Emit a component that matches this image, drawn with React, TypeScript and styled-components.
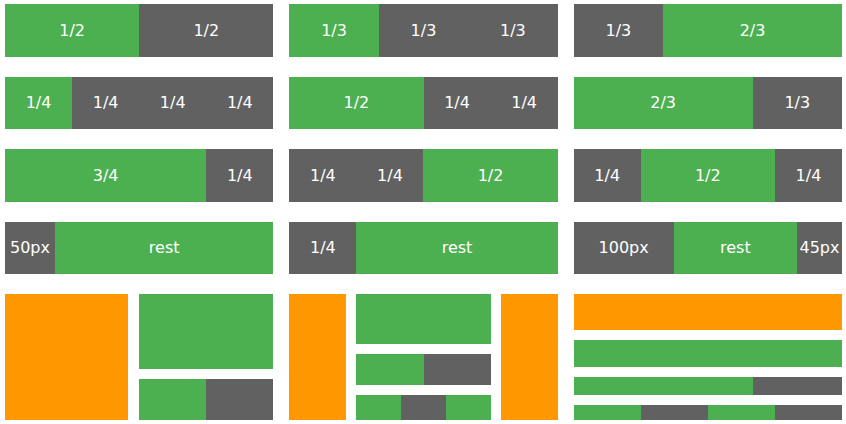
import { createGlobalStyle } from 'styled-components';
import styled from 'styled-components';

type Tone = 'green' | 'gray' | 'orange';

const colors: Record<Tone, string> = {
  green: '#4caf50',
  gray: '#616161',
  orange: '#ff9800',
};

const GlobalStyle = createGlobalStyle`
  html, body {
    margin: 0;
    padding: 0;
    background: #fff;
    font-family: 'DejaVu Sans', Verdana, sans-serif;
  }
`;

const Page = styled.div`
  display: grid;
  grid-template-columns: repeat(3, 268.33px);
  column-gap: 16px;
  padding: 4px 0 0 5px;
`;

const Column = styled.div`
  display: flex;
  flex-direction: column;
  gap: 20px;
`;

const Bar = styled.div`
  display: flex;
  height: 52.5px;
`;

const Cell = styled.div<{ $tone: Tone; $grow?: number; $width?: number }>`
  display: flex;
  align-items: center;
  justify-content: center;
  flex: ${(p) => (p.$width ? `0 0 ${p.$width}px` : `${p.$grow ?? 1} 1 0`)};
  min-width: 0;
  background: ${(p) => colors[p.$tone]};
  color: #fff;
  font-size: 16px;
  white-space: nowrap;
`;

const Block = styled.div<{ $tone: Tone; $h?: number }>`
  background: ${(p) => colors[p.$tone]};
  ${(p) => (p.$h ? `height: ${p.$h}px; flex: 0 0 ${p.$h}px;` : 'flex: 1 1 0;')}
`;

const Split = styled.div<{ $h?: number }>`
  display: flex;
  ${(p) => (p.$h ? `height: ${p.$h}px; flex: 0 0 ${p.$h}px;` : 'flex: 1 1 0;')}
`;

const Piece = styled.div<{ $tone: Tone; $grow?: number }>`
  flex: ${(p) => p.$grow ?? 1} 1 0;
  background: ${(p) => colors[p.$tone]};
`;

const Stack = styled.div`
  display: flex;
  flex-direction: column;
  gap: 10px;
  min-width: 0;
`;

const SideLayout = styled.div`
  display: grid;
  grid-template-columns: 123px 1fr;
  column-gap: 11px;
  height: 126px;
`;

const HolyLayout = styled.div`
  display: grid;
  grid-template-columns: 57px 1fr 57px;
  column-gap: 10px;
  height: 126px;
`;

const StripLayout = styled(Stack)`
  height: 126px;
`;

export default function App() {
  return (
    <>
      <GlobalStyle />
      <Page>
        <Column>
          <Bar>
            <Cell $tone="green">1/2</Cell>
            <Cell $tone="gray">1/2</Cell>
          </Bar>
          <Bar>
            <Cell $tone="green">1/4</Cell>
            <Cell $tone="gray">1/4</Cell>
            <Cell $tone="gray">1/4</Cell>
            <Cell $tone="gray">1/4</Cell>
          </Bar>
          <Bar>
            <Cell $tone="green" $grow={3}>3/4</Cell>
            <Cell $tone="gray">1/4</Cell>
          </Bar>
          <Bar>
            <Cell $tone="gray" $width={50}>50px</Cell>
            <Cell $tone="green">rest</Cell>
          </Bar>
          <SideLayout>
            <Block $tone="orange" />
            <Stack>
              <Block $tone="green" $h={75} />
              <Split>
                <Piece $tone="green" />
                <Piece $tone="gray" />
              </Split>
            </Stack>
          </SideLayout>
        </Column>

        <Column>
          <Bar>
            <Cell $tone="green">1/3</Cell>
            <Cell $tone="gray">1/3</Cell>
            <Cell $tone="gray">1/3</Cell>
          </Bar>
          <Bar>
            <Cell $tone="green" $grow={2}>1/2</Cell>
            <Cell $tone="gray">1/4</Cell>
            <Cell $tone="gray">1/4</Cell>
          </Bar>
          <Bar>
            <Cell $tone="gray">1/4</Cell>
            <Cell $tone="gray">1/4</Cell>
            <Cell $tone="green" $grow={2}>1/2</Cell>
          </Bar>
          <Bar>
            <Cell $tone="gray" $grow={1}>1/4</Cell>
            <Cell $tone="green" $grow={3}>rest</Cell>
          </Bar>
          <HolyLayout>
            <Block $tone="orange" />
            <Stack>
              <Block $tone="green" $h={50} />
              <Split $h={31}>
                <Piece $tone="green" />
                <Piece $tone="gray" />
              </Split>
              <Split>
                <Piece $tone="green" />
                <Piece $tone="gray" />
                <Piece $tone="green" />
              </Split>
            </Stack>
            <Block $tone="orange" />
          </HolyLayout>
        </Column>

        <Column>
          <Bar>
            <Cell $tone="gray">1/3</Cell>
            <Cell $tone="green" $grow={2}>2/3</Cell>
          </Bar>
          <Bar>
            <Cell $tone="green" $grow={2}>2/3</Cell>
            <Cell $tone="gray">1/3</Cell>
          </Bar>
          <Bar>
            <Cell $tone="gray">1/4</Cell>
            <Cell $tone="green" $grow={2}>1/2</Cell>
            <Cell $tone="gray">1/4</Cell>
          </Bar>
          <Bar>
            <Cell $tone="gray" $width={100}>100px</Cell>
            <Cell $tone="green">rest</Cell>
            <Cell $tone="gray" $width={45}>45px</Cell>
          </Bar>
          <StripLayout>
            <Block $tone="orange" $h={36} />
            <Block $tone="green" $h={27} />
            <Split $h={18}>
              <Piece $tone="green" $grow={2} />
              <Piece $tone="gray" />
            </Split>
            <Split>
              <Piece $tone="green" />
              <Piece $tone="gray" />
              <Piece $tone="green" />
              <Piece $tone="gray" />
            </Split>
          </StripLayout>
        </Column>
      </Page>
    </>
  );
}
